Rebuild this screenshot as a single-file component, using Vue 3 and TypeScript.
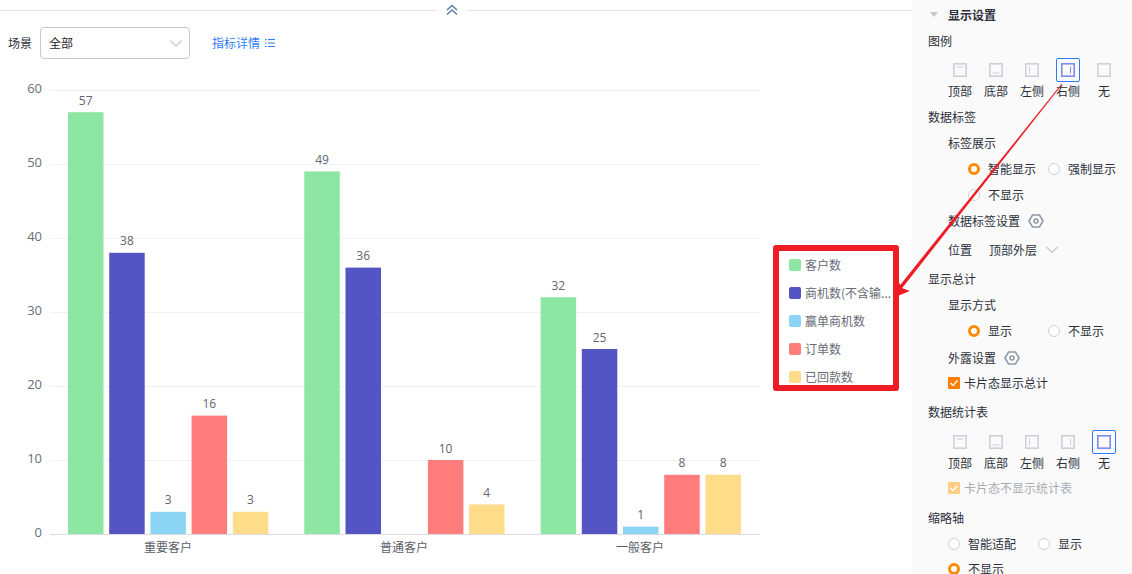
<script setup lang="ts">
const colors = ['#8ee6a5', '#5454c4', '#8bd4f4', '#ff7c7c', '#ffdc8a']
const data = [
  { name: '重要客户', values: [57, 38, 3, 16, 3] },
  { name: '普通客户', values: [49, 36, 0, 10, 4] },
  { name: '一般客户', values: [32, 25, 1, 8, 8] },
]
const legend = ['客户数', '商机数(不含输...', '赢单商机数', '订单数', '已回款数']
const ticks = [0, 10, 20, 30, 40, 50, 60]
const base = 534
const unit = 7.4
const y = (v: number) => base - v * unit
const barX = (g: number, i: number) => 68 + g * 236.3 + i * 41.2
const layoutOpts = ['顶部', '底部', '左侧', '右侧', '无']
const marks: Record<string, string> = {
  顶部: 'M3.5 4h7',
  底部: 'M3.5 10h7',
  左侧: 'M4.500 3.500v7',
  右侧: 'M9.500 3.500v7',
  无: '',
}
</script>

<template>
  <div class="page">
    <main class="main">
      <div class="collapse">
        <span class="rule"></span>
        <svg class="chev" width="14" height="14" viewBox="0 0 14 14" fill="none" stroke="#5b7ea6" stroke-width="1.500">
          <path d="M2 7 7 2.500 12 7" />
          <path d="M2 11.500 7 7l5 4.500" />
        </svg>
        <span class="rule"></span>
      </div>
      <div class="toolbar">
        <span class="scene">场景</span>
        <div class="select">
          <span>全部</span>
          <svg width="12" height="7" viewBox="0 0 12 7" fill="none" stroke="#c3c5d0" stroke-width="1.200"><path d="M.5.700 6 6l5.500-5.300" /></svg>
        </div>
        <a class="detail">指标详情
          <svg width="12" height="12" viewBox="0 0 12 12" fill="none" stroke="#2f7bff" stroke-width="1">
            <path d="M4 2.500h7M4 6h7M4 9.500h7" />
            <path d="M1 2.500h1.500M1 6h1.500M1 9.500h1.500" />
          </svg>
        </a>
      </div>
      <svg class="chart" width="912" height="574" viewBox="0 0 912 574">
        <g v-for="t in ticks" :key="t">
          <line x1="50" x2="760" :y1="y(t) + 0.5" :y2="y(t) + 0.5" :stroke="t === 0 ? '#dcdde3' : '#f2f2f5'" />
          <text x="42" :y="y(t) + 3" text-anchor="end" class="axis">{{ t }}</text>
        </g>
        <g v-for="(g, gi) in data" :key="g.name">
          <g v-for="(v, i) in g.values" :key="i">
            <rect :x="barX(gi, i)" :y="y(v)" width="35.500" :height="v * unit" :fill="colors[i]" />
            <text v-if="v > 0" :x="barX(gi, i) + 17.700" :y="y(v) - 7.500" text-anchor="middle" class="val">{{ v }}</text>
          </g>
          <text :x="168 + gi * 236" y="552" text-anchor="middle" class="cat">{{ g.name }}</text>
        </g>
      </svg>
      <ul class="legend">
        <li v-for="(l, i) in legend" :key="l">
          <i :style="{ background: colors[i] }"></i>{{ l }}
        </li>
      </ul>
    </main>

    <aside class="panel">
      <div class="head"><span class="tri"></span><b>显示设置</b></div>
      <div class="sec">图例</div>
      <div class="layouts">
        <div v-for="o in layoutOpts" :key="o" class="opt">
          <span class="box" :class="{ on: o === '右侧' }">
            <svg width="14" height="14" viewBox="0 0 14 14" fill="none" :stroke="o === '右侧' ? '#7f8df0' : '#cbd0dc'">
              <rect x=".8" y=".8" width="12.400" height="12.400" stroke-width="1.600" />
              <path :d="marks[o]" stroke-width="1" />
            </svg>
          </span>
          <span>{{ o }}</span>
        </div>
      </div>
      <div class="sec s2">数据标签</div>
      <div class="sub s3">标签展示</div>
      <div class="radios r1">
        <label><i class="radio on"></i>智能显示</label>
        <label><i class="radio"></i>强制显示</label>
        <label class="full"><i class="radio"></i>不显示</label>
      </div>
      <div class="sub s4">数据标签设置
        <svg class="hex" width="16" height="16" viewBox="0 0 16 16" fill="none" stroke="#8f9aa8" stroke-width="1.600">
          <path d="M4.500 2h7L15 8l-3.500 6h-7L1 8z" /><circle cx="8" cy="8" r="2" />
        </svg>
      </div>
      <div class="sub s5"><span>位置</span><span class="pos">顶部外层</span>
        <svg width="14" height="8" viewBox="0 0 14 8" fill="none" stroke="#c3c5d0" stroke-width="1.200"><path d="M1.500 1 7 6.500 12.500 1" /></svg>
      </div>
      <div class="sec s6">显示总计</div>
      <div class="sub s7">显示方式</div>
      <div class="radios r2">
        <label><i class="radio on"></i>显示</label>
        <label><i class="radio"></i>不显示</label>
      </div>
      <div class="sub s8">外露设置
        <svg class="hex" width="16" height="16" viewBox="0 0 16 16" fill="none" stroke="#8f9aa8" stroke-width="1.600">
          <path d="M4.500 2h7L15 8l-3.500 6h-7L1 8z" /><circle cx="8" cy="8" r="2" />
        </svg>
      </div>
      <div class="check s9">
        <i class="cb"><svg width="12" height="12" viewBox="0 0 12 12" fill="none" stroke="#fff" stroke-width="1.400"><path d="M2.500 6 5 8.500l4.500-5" /></svg></i>卡片态显示总计
      </div>
      <div class="sec s10">数据统计表</div>
      <div class="layouts l2">
        <div v-for="o in layoutOpts" :key="o" class="opt">
          <span class="box" :class="{ on: o === '无' }">
            <svg width="14" height="14" viewBox="0 0 14 14" fill="none" :stroke="o === '无' ? '#7f8df0' : '#cbd0dc'">
              <rect x=".8" y=".8" width="12.400" height="12.400" stroke-width="1.600" />
              <path :d="marks[o]" stroke-width="1" />
            </svg>
          </span>
          <span>{{ o }}</span>
        </div>
      </div>
      <div class="check dim s11">
        <i class="cb"><svg width="12" height="12" viewBox="0 0 12 12" fill="none" stroke="#fff" stroke-width="1.400"><path d="M2.500 6 5 8.500l4.500-5" /></svg></i>卡片态不显示统计表
      </div>
      <div class="sec s12">缩略轴</div>
      <div class="radios r3">
        <label><i class="radio"></i>智能适配</label>
        <label><i class="radio"></i>显示</label>
        <label class="full"><i class="radio on"></i>不显示</label>
      </div>
    </aside>

    <div class="callout"></div>
    <svg class="arrow" width="1132" height="574" viewBox="0 0 1132 574">
      <path d="M1062.400 84.300 901.400 289.100 898.600 286.900 1061.600 83.700z" fill="#ee1c25" />
      <path d="M895 297 898 281 902 288 910 291z" fill="#ee1c25" />
    </svg>
  </div>
</template>

<style>
html, body { margin: 0; background: #fff; overflow: hidden; }
</style>

<style scoped>
.page {
  position: relative;
  display: flex;
  width: 1132px;
  height: 574px;
  overflow: hidden;
  font: 12px/16px "Noto Sans CJK SC", "Liberation Sans", sans-serif;
  color: #2b2f3a;
}
.main { position: relative; width: 912px; flex: none; }
.collapse { display: flex; align-items: center; gap: 8px; height: 20px; }
.rule { flex: 1; height: 1px; background: #e2e2ea; }
.rule:first-child { flex: none; width: 437px; }
.chev { flex: none; }
.toolbar { display: flex; align-items: center; padding: 7px 0 0 8px; height: 32px; }
.scene { margin-right: 8px; }
.select {
  display: flex; align-items: center; justify-content: space-between;
  box-sizing: border-box; width: 150px; height: 32px; padding: 0 7px 0 8px;
  border: 1px solid #c7c7d1; border-radius: 4px; color: #1f2229;
}
.detail { display: flex; align-items: center; gap: 4px; margin-left: 22px; color: #2f7bff; }
.chart { position: absolute; left: 0; top: 0; pointer-events: none; }
.axis { font-size: 13px; fill: #6a6d78; font-family: "Open Sans", "Liberation Sans", sans-serif; }
.val { font-size: 12px; fill: #62646e; font-family: "Open Sans", "Liberation Sans", sans-serif; }
.cat { font-size: 12px; fill: #5b5e69; font-family: "Noto Sans CJK SC", sans-serif; }
.legend {
  position: absolute; left: 789px; top: 251px; width: 110px; margin: 0; padding: 0;
  list-style: none; color: #696c77;
}
.legend li { display: flex; align-items: center; gap: 4px; height: 28px; white-space: nowrap; }
.legend i { width: 12px; height: 12px; border-radius: 2px; flex: none; }
.panel {
  flex: 1; box-sizing: border-box; padding: 7px 0 0 16px; background: #fafafa;
  display: flex; flex-direction: column;
}
.head { display: flex; align-items: center; height: 15px; }
.head b { font-weight: 700; color: #2b2f3a; margin-left: 10px; }
.tri { width: 0; height: 0; border: 4px solid transparent; border-top: 5px solid #c3c5cf; border-bottom: 0; margin-left: 2px; }
.sec { height: 16px; margin-top: 10px; }
.head + .sec { margin-top: 11px; }
.layouts { display: flex; padding-left: 14px; margin-top: 9px; }
.opt { width: 36px; display: flex; flex-direction: column; align-items: center; gap: 1px; }
.box { box-sizing: border-box; width: 24px; height: 24px; display: flex; align-items: center; justify-content: center; border: 1px solid transparent; border-radius: 2px; }
.box.on { border-color: #2f7bff; }
.sub { padding-left: 20px; display: flex; align-items: center; height: 16px; }
.hex { margin-left: 8px; }
.radios { display: flex; flex-wrap: wrap; padding-left: 40px; }
.radios label { display: flex; align-items: center; width: 80px; height: 26px; white-space: nowrap; }
.radios .full { width: 100%; }
.radio { box-sizing: border-box; width: 12px; height: 12px; border: 1px solid #cfd1da; border-radius: 50%; margin-right: 8px; background: #fff; }
.radio.on { border: 3px solid #ff8a00; }
.check { display: flex; align-items: center; padding-left: 20px; height: 16px; }
.cb { width: 12px; height: 12px; background: #ff7d00; border-radius: 1px; margin-right: 4px; display: flex; }
.dim { color: #a9acb5; }
.dim .cb { background: #ffcd85; }
.s2 { margin-top: 10px; } .s3 { margin-top: 10px; }
.r1 { margin-top: 5px; } .s4 { margin-top: 5px; } .s5 { margin-top: 13px; }
.pos { margin-left: 17px; margin-right: 8px; }
.s6 { margin-top: 13px; } .s7 { margin-top: 10px; }
.r2 { margin-top: 5px; } .s8 { margin-top: 6px; } .s9 { margin-top: 9px; }
.s10 { margin-top: 13px; } .l2 { margin-top: 10px; }
.s11 { margin-top: 9px; } .s12 { margin-top: 14px; }
.r3 { margin-top: 5px; padding-left: 20px; }
.r3 label { width: 90px; height: 25px; }
.callout {
  position: absolute; left: 773px; top: 245px; width: 126px; height: 146px;
  box-sizing: border-box; border: 6px solid #ee1c25; border-radius: 3px;
}
.arrow { position: absolute; left: 0; top: 0; pointer-events: none; }
</style>
